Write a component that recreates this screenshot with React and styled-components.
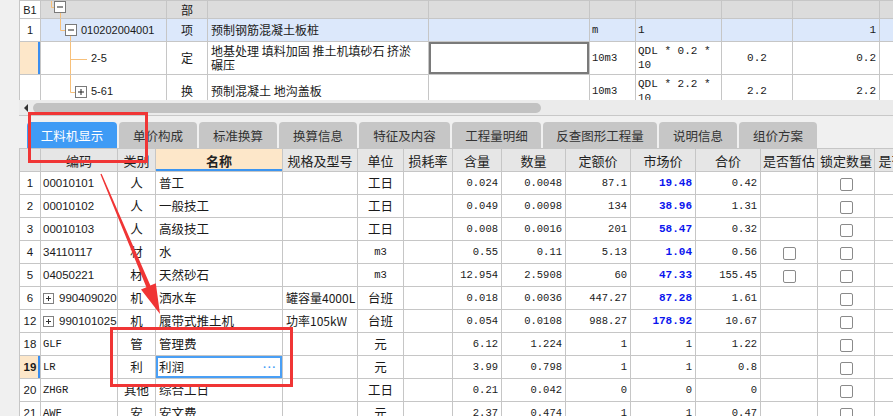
import React from 'react';
import styled, { createGlobalStyle, css } from 'styled-components';

const CN = `"Noto Sans CJK SC", "Microsoft YaHei", sans-serif`;
const MONO = `"Liberation Mono", "Noto Sans CJK SC", monospace`;
const SANS = `"Liberation Sans", "Noto Sans CJK SC", sans-serif`;
const fonts = { cn: CN, mono: MONO, sans: SANS };

const GlobalStyle = createGlobalStyle`
  html, body { margin: 0; padding: 0; background: #f0f0f0; overflow: hidden; }
  * { box-sizing: border-box; }
`;

const Page = styled.div`
  position: relative;
  width: 893px;
  height: 416px;
  overflow: hidden;
  background: #f0f0f0;
  font-family: ${CN};
  color: #1a1a1a;
`;

const TopPane = styled.div`
  height: 100px;
  margin-left: 19px;
  overflow: hidden;
  background: #fff;
`;

const Grid = styled.table`
  border-collapse: collapse;
  table-layout: fixed;
  width: ${(p) => p.$width}px;
  background: #fff;
`;

const Row = styled.tr`
  height: ${(p) => p.$h}px;
`;

const Cell = styled.td`
  border: 1px solid #c6c6c6;
  padding: 0 ${(p) => (p.$pad ?? 3)}px;
  text-align: ${(p) => p.$align || 'left'};
  font-family: ${(p) => fonts[p.$font || 'cn']};
  font-size: ${(p) => p.$size || 12}px;
  font-weight: ${(p) => (p.$bold ? 700 : 400)};
  color: ${(p) => p.$color || '#1a1a1a'};
  background: ${(p) => p.$bg || '#fff'};
  line-height: 14px;
  white-space: nowrap;
  overflow: hidden;
  vertical-align: middle;
  ${(p) => p.$wrap && css`white-space: normal;`}
  ${(p) => p.$cur && css`box-shadow: inset -2px 0 0 #3a8ef0;`}
  ${(p) => p.$sel === 'gray' && css`box-shadow: inset 0 0 0 2px #7a7a7a;`}
  ${(p) => p.$sel === 'blue' && css`box-shadow: inset 0 0 0 2px #4a9ff5;`}
`;

const HeadCell = styled.th`
  border: 1px solid #c6c6c6;
  padding: 0 2px;
  font-family: ${CN};
  font-size: 13px;
  font-weight: ${(p) => (p.$hl ? 700 : 400)};
  color: #222;
  background: ${(p) => (p.$hl ? '#fde7c9' : '#e6e6e6')};
  ${(p) => p.$hl && css`box-shadow: inset 0 -2px 0 #3c95f0;`}
  white-space: nowrap;
  overflow: hidden;
`;

const TreeWrap = styled.div`
  display: flex;
  align-items: center;
  height: ${(p) => p.$h - 1}px;
`;

const TreeLabel = styled.span`
  font-family: ${(p) => fonts[p.$font || 'sans']};
  font-size: 11px;
  color: #1a1a1a;
`;

const ScrollRow = styled.div`
  display: flex;
  align-items: center;
  height: 16px;
  margin-left: 19px;
  padding-left: 5px;
  background: #ebebeb;
  border-bottom: 1px solid #c8c8c8;
`;

const ScrollArrow = styled.span`
  width: 0;
  height: 0;
  border-top: 4px solid transparent;
  border-bottom: 4px solid transparent;
  border-right: 4px solid #333;
  margin-right: 5px;
`;

const ScrollThumb = styled.div`
  width: 508px;
  height: 10px;
  border-radius: 5px;
  background: #c2c2c2;
`;

const TabBar = styled.div`
  display: flex;
  align-items: flex-end;
  gap: 2px;
  height: 32px;
  padding-left: 27px;
  background: #f0f0f0;
`;

const Tab = styled.div`
  display: flex;
  align-items: center;
  justify-content: center;
  width: ${(p) => p.$w}px;
  height: 26px;
  border-radius: 4px 4px 0 0;
  font-family: ${CN};
  font-size: 12.5px;
  color: ${(p) => (p.$active ? '#fff' : '#333')};
  background: ${(p) => (p.$active ? '#3f9bf5' : '#c6c6c6')};
`;

const BottomPane = styled.div`
  margin-left: 19px;
  overflow: hidden;
`;

const Check = styled.span`
  display: inline-block;
  width: 13px;
  height: 13px;
  border: 1px solid #8a8a8a;
  border-radius: 2px;
  background: #fff;
  vertical-align: middle;
`;

const Expand = styled.span`
  position: relative;
  display: inline-block;
  width: 11px;
  height: 11px;
  border: 1px solid #808080;
  background: #fff;
  margin: 0 5px 0 0;
  vertical-align: middle;
  &::before, &::after {
    content: '';
    position: absolute;
    background: #333;
  }
  &::before { left: 2px; right: 2px; top: 4px; height: 1px; }
  &::after { top: 2px; bottom: 2px; left: 4px; width: 1px; }
`;

const CellFlex = styled.div`
  display: flex;
  align-items: center;
  justify-content: space-between;
`;

const Dots = styled.span`
  font-family: ${SANS};
  font-weight: 700;
  font-size: 11px;
  color: #4a9ff5;
  letter-spacing: 1px;
  margin-right: 2px;
`;

const Overlay = styled.svg`
  position: absolute;
  left: 0;
  top: 0;
  pointer-events: none;
`;

const RedBox = styled.div`
  position: absolute;
  left: ${(p) => p.$x}px;
  top: ${(p) => p.$y}px;
  width: ${(p) => p.$w}px;
  height: ${(p) => p.$h}px;
  border: 3px solid #f03535;
  pointer-events: none;
`;

const ORANGE = '#f7c07a';

// tree glyph: lines [x1,y1,x2,y2], boxes [x,y,minus?]
const Tree = ({ h, lines, boxes }) => (
  <svg width="50" height={h - 1} style={{ display: 'block', flex: 'none' }}>
    {lines.map((l, i) => (
      <line key={i} x1={l[0]} y1={l[1]} x2={l[2]} y2={l[3]} stroke={ORANGE} strokeWidth="1" />
    ))}
    {boxes.map(([x, y, minus], i) => (
      <g key={i}>
        <rect x={x + 0.5} y={y + 0.5} width="11" height="11" fill="#fff" stroke="#7a7a7a" />
        <line x1={x + 3} y1={y + 6} x2={x + 9} y2={y + 6} stroke="#222" />
        {!minus && <line x1={x + 6} y1={y + 3} x2={x + 6} y2={y + 9} stroke="#222" />}
      </g>
    ))}
  </svg>
);

const topCols = [21, 126, 41, 221, 161, 46, 86, 71, 87, 80];
const bottomCols = [21, 77, 38, 127, 75, 46, 49, 49, 64, 65, 65, 65, 57, 57, 60];

const GRAY = '#dcdcdc';
const BLUE = '#dce8fb';
const PEACH = '#fde7c9';

function TopTable() {
  return (
    <Grid $width={topCols.reduce((a, b) => a + b, 0)}>
      <colgroup>
        {topCols.map((w, i) => <col key={i} style={{ width: w }} />)}
      </colgroup>
      <tbody>
        <Row $h={18}>
          <Cell $align="center" $font="sans" $size={11} $pad={0}>B1</Cell>
          <Cell $pad={0} $bg={GRAY}>
            <TreeWrap $h={18}>
              <Tree h={18} lines={[[10.5, 0, 10.5, 6.5], [10.5, 6.5, 13, 6.5], [19.5, 12, 19.5, 18]]} boxes={[[13, 0, true]]} />
            </TreeWrap>
          </Cell>
          <Cell $align="center" $bg={GRAY}>部</Cell>
          <Cell $bg={GRAY} />
          <Cell $bg={GRAY} />
          <Cell $bg={GRAY} />
          <Cell $bg={GRAY} />
          <Cell $bg={GRAY} />
          <Cell $bg={GRAY} />
          <Cell $bg={GRAY} />
        </Row>
        <Row $h={23}>
          <Cell $align="center" $font="sans" $size={11} $pad={0}>1</Cell>
          <Cell $pad={0} $bg={BLUE}>
            <TreeWrap $h={23}>
              <Tree h={23} lines={[[19.5, 0, 19.5, 11.5], [19.5, 11.5, 24, 11.5], [29.5, 17, 29.5, 23]]} boxes={[[24, 5, true]]} />
              <TreeLabel style={{ marginLeft: -10 }}>010202004001</TreeLabel>
            </TreeWrap>
          </Cell>
          <Cell $align="center" $bg={BLUE}>项</Cell>
          <Cell $bg={BLUE}>预制钢筋混凝土板桩</Cell>
          <Cell $bg={BLUE} />
          <Cell $bg={BLUE} $font="mono" $size={10.5} $pad={2}>m</Cell>
          <Cell $bg={BLUE} $font="mono" $size={11} $pad={2}>1</Cell>
          <Cell $bg={BLUE} />
          <Cell $bg={BLUE} $align="right" $font="mono" $size={11}>1</Cell>
          <Cell $bg={BLUE} />
        </Row>
        <Row $h={33}>
          <Cell $bg={PEACH} $cur />
          <Cell $pad={0}>
            <TreeWrap $h={33}>
              <Tree h={33} lines={[[29.5, 0, 29.5, 33], [29.5, 17.5, 46, 17.5]]} boxes={[]} />
              <TreeLabel>2-5</TreeLabel>
            </TreeWrap>
          </Cell>
          <Cell $align="center">定</Cell>
          <Cell $wrap>地基处理 填料加固 推土机填砂石 挤淤<br />碾压</Cell>
          <Cell $sel="gray" />
          <Cell $font="mono" $size={10.5} $pad={2}>10m3</Cell>
          <Cell $font="mono" $size={11} $pad={2} $wrap>QDL * 0.2 *<br />10</Cell>
          <Cell $align="center" $font="mono" $size={11}>0.2</Cell>
          <Cell $align="right" $font="mono" $size={11}>0.2</Cell>
          <Cell />
        </Row>
        <Row $h={33}>
          <Cell />
          <Cell $pad={0}>
            <TreeWrap $h={33}>
              <Tree h={33} lines={[[29.5, 0, 29.5, 17.5], [29.5, 17.5, 34, 17.5]]} boxes={[[34, 11, false]]} />
              <TreeLabel>5-61</TreeLabel>
            </TreeWrap>
          </Cell>
          <Cell $align="center">换</Cell>
          <Cell>预制混凝土 地沟盖板</Cell>
          <Cell />
          <Cell $font="mono" $size={10.5} $pad={2}>10m3</Cell>
          <Cell $font="mono" $size={11} $pad={2} $wrap>QDL * 2.2 *<br />10</Cell>
          <Cell $align="center" $font="mono" $size={11}>2.2</Cell>
          <Cell $align="right" $font="mono" $size={11}>2.2</Cell>
          <Cell />
        </Row>
      </tbody>
    </Grid>
  );
}

const heads = ['', '编码', '类别', '名称', '规格及型号', '单位', '损耗率', '含量', '数量', '定额价', '市场价', '合价', '是否暂估', '锁定数量', '是否暂估'];

const rows = [
  { i: '1', code: '00010101', cat: '人', name: '普工', unit: '工日', qty: '0.024', num: '0.0048', price: '87.1', mkt: '19.48', total: '0.42', hot: true },
  { i: '2', code: '00010102', cat: '人', name: '一般技工', unit: '工日', qty: '0.049', num: '0.0098', price: '134', mkt: '38.96', total: '1.31', hot: true },
  { i: '3', code: '00010103', cat: '人', name: '高级技工', unit: '工日', qty: '0.008', num: '0.0016', price: '201', mkt: '58.47', total: '0.32', hot: true },
  { i: '4', code: '34110117', cat: '材', name: '水', unit: 'm3', qty: '0.55', num: '0.11', price: '5.13', mkt: '1.04', total: '0.56', hot: true, est: true },
  { i: '5', code: '04050221', cat: '材', name: '天然砂石', unit: 'm3', qty: '12.954', num: '2.5908', price: '60', mkt: '47.33', total: '155.45', hot: true, est: true },
  { i: '6', code: '990409020', plus: true, cat: '机', name: '洒水车', spec: '罐容量4000L', unit: '台班', qty: '0.018', num: '0.0036', price: '447.27', mkt: '87.28', total: '1.61', hot: true },
  { i: '12', code: '990101025', plus: true, cat: '机', name: '履带式推土机', spec: '功率105kW', unit: '台班', qty: '0.054', num: '0.0108', price: '988.27', mkt: '178.92', total: '10.67', hot: true },
  { i: '18', code: 'GLF', mono: true, cat: '管', name: '管理费', unit: '元', qty: '6.12', num: '1.224', price: '1', mkt: '1', total: '1.22' },
  { i: '19', code: 'LR', mono: true, cat: '利', name: '利润', unit: '元', qty: '3.99', num: '0.798', price: '1', mkt: '1', total: '0.8', current: true },
  { i: '20', code: 'ZHGR', mono: true, cat: '其他', name: '综合工日', unit: '工日', qty: '0.21', num: '0.042', price: '0', mkt: '0', total: '0' },
  { i: '21', code: 'AWF', mono: true, cat: '安', name: '安文费', unit: '元', qty: '2.37', num: '0.474', price: '1', mkt: '1', total: '0.47' },
];

function BottomTable() {
  return (
    <Grid $width={bottomCols.reduce((a, b) => a + b, 0)}>
      <colgroup>
        {bottomCols.map((w, i) => <col key={i} style={{ width: w }} />)}
      </colgroup>
      <thead>
        <Row $h={23}>
          {heads.map((h, i) => (
            <HeadCell key={i} $hl={i === 3}>{h}</HeadCell>
          ))}
        </Row>
      </thead>
      <tbody>
        {rows.map((r) => (
          <Row key={r.i} $h={23}>
            <Cell $align="center" $font="sans" $size={11.5} $pad={0} $bold={r.current} $bg={r.current ? PEACH : '#fff'} $cur={r.current}>{r.i}</Cell>
            <Cell $pad={2} $font={r.mono ? 'mono' : 'sans'} $size={r.mono ? 10.5 : 11.5}>
              {r.plus && <Expand />}
              {r.code}
            </Cell>
            <Cell $align="center" $size={12.5}>{r.cat}</Cell>
            {r.current ? (
              <Cell $sel="blue" $size={12.5}>
                <CellFlex><span>{r.name}</span><Dots>···</Dots></CellFlex>
              </Cell>
            ) : (
              <Cell $size={12.5}>{r.name}</Cell>
            )}
            <Cell $size={12}>{r.spec}</Cell>
            <Cell $align="center" $font={r.unit === 'm3' ? 'mono' : 'cn'} $size={r.unit === 'm3' ? 10.5 : 12.5}>{r.unit}</Cell>
            <Cell />
            <Cell $align="right" $font="mono" $size={10.5}>{r.qty}</Cell>
            <Cell $align="right" $font="mono" $size={10.5}>{r.num}</Cell>
            <Cell $align="right" $font="mono" $size={10.5}>{r.price}</Cell>
            <Cell $align="right" $font="mono" $size={r.hot ? 11 : 10.5} $bold={r.hot} $color={r.hot ? '#0a14ee' : '#1a1a1a'}>{r.mkt}</Cell>
            <Cell $align="right" $font="mono" $size={10.5}>{r.total}</Cell>
            <Cell $align="center">{r.est && <Check />}</Cell>
            <Cell $align="center"><Check /></Cell>
            <Cell />
          </Row>
        ))}
      </tbody>
    </Grid>
  );
}

const tabs = [
  ['工料机显示', 90],
  ['单价构成', 78],
  ['标准换算', 78],
  ['换算信息', 78],
  ['特征及内容', 91],
  ['工程量明细', 89],
  ['反查图形工程量', 114],
  ['说明信息', 78],
  ['组价方案', 78],
];

export default function App() {
  return (
    <Page>
      <GlobalStyle />
      <TopPane>
        <TopTable />
      </TopPane>
      <ScrollRow>
        <ScrollArrow />
        <ScrollThumb />
      </ScrollRow>
      <TabBar>
        {tabs.map(([t, w], i) => (
          <Tab key={t} $w={w} $active={i === 0}>{t}</Tab>
        ))}
      </TabBar>
      <BottomPane>
        <BottomTable />
      </BottomPane>

      <RedBox $x={28} $y={112} $w={120} $h={51} />
      <RedBox $x={110} $y={327} $w={183} $h={60} />
      <Overlay width="893" height="416">
        <polygon
          points="101.6,173.8 150.4,285.5 155.8,283.3 160,314 141,289.5 146.4,287.3 100.4,174.2"
          fill="#f03535"
        />
      </Overlay>
    </Page>
  );
}
